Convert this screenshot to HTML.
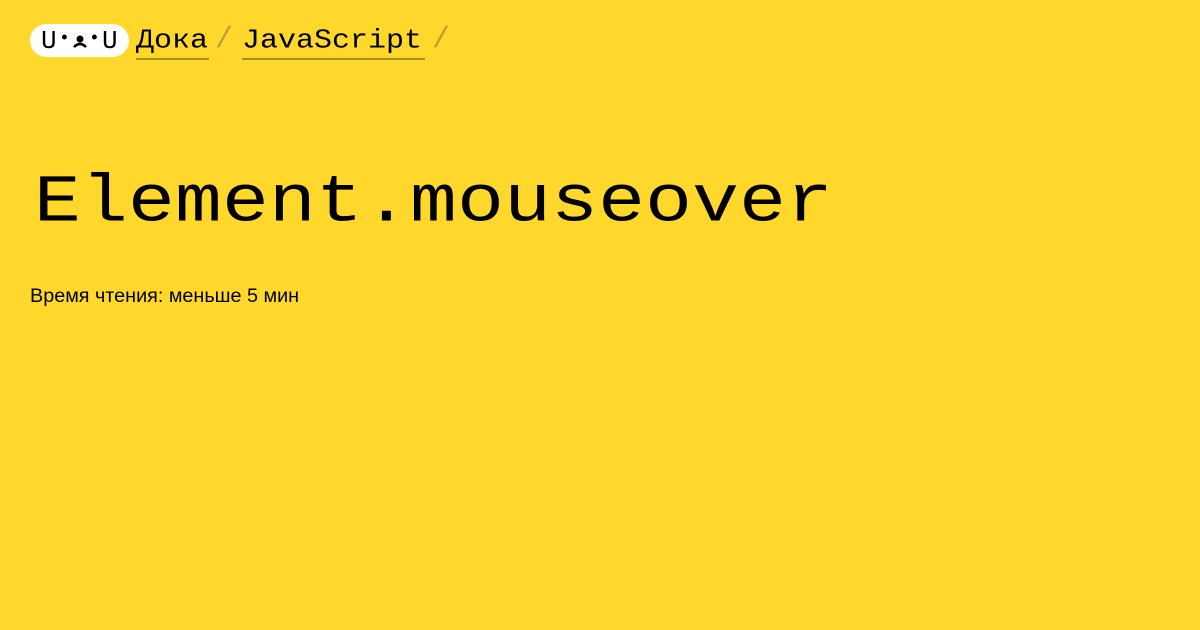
<!DOCTYPE html>
<html><head><meta charset="utf-8"><style>
body{margin:0;width:1200px;height:630px;background:#ffd82b;overflow:hidden;position:relative;font-family:"Liberation Mono",monospace;color:#000}
.pill{position:absolute;left:30px;top:24px;width:99px;height:33px;background:#fff;border-radius:17px}
.pill span{position:absolute;top:3px;font-size:26px;line-height:28px}
.nav{position:absolute;top:22px;font-size:30px;line-height:36px;transform:scaleY(0.9);transform-origin:0 28px}
.ul{position:absolute;top:58px;height:2px;background:#a8901f}
.sl{position:absolute;top:22px;font-size:30px;line-height:36px;color:#b8a033}
h1{position:absolute;left:34px;top:150px;margin:0;font-weight:normal;font-size:78px;line-height:100px;letter-spacing:0.2px;transform:scaleY(0.86);transform-origin:0 74px}
.rt{position:absolute;left:30px;top:284px;font-family:"Liberation Sans",sans-serif;font-size:19.8px;line-height:24px}
</style></head><body>
<div class="pill">
<span style="left:11px">U</span>
<span style="left:29px;top:1px;font-size:18px">•</span>
<svg style="position:absolute;left:42px;top:11px" width="16" height="14" viewBox="0 0 16 14"><circle cx="8" cy="4" r="3.5" fill="#000"/><path d="M2 12 Q8 6 14 12" stroke="#000" stroke-width="2.5" fill="none"/></svg>
<span style="left:59px;top:1px;font-size:18px">•</span>
<span style="left:72px">U</span>
</div>
<div class="nav" style="left:136px">Дока</div>
<div class="ul" style="left:136px;width:73px"></div>
<div class="sl" style="left:215px">/</div>
<div class="nav" style="left:242px">JavaScript</div>
<div class="ul" style="left:242px;width:183px"></div>
<div class="sl" style="left:432px">/</div>
<h1>Element.mouseover</h1>
<div class="rt">Время чтения: меньше 5 мин</div>
</body></html>
